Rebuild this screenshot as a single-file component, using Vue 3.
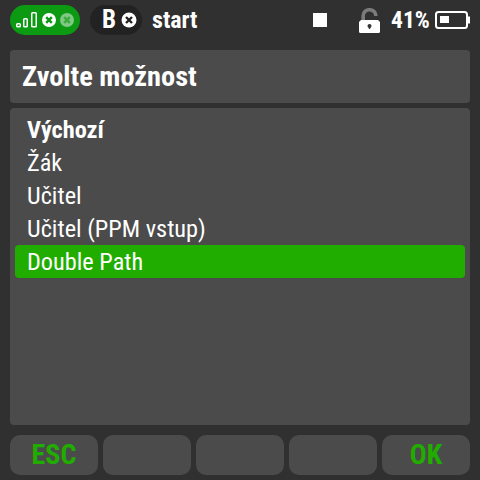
<script setup>
const rows = [
  { label: 'Výchozí', bold: true },
  { label: 'Žák' },
  { label: 'Učitel' },
  { label: 'Učitel (PPM vstup)' },
  { label: 'Double Path', active: true },
]
const keys = ['ESC', '', '', '', 'OK']
</script>

<template>
  <div class="screen">
    <header class="top">
      <div class="pill green">
        <svg class="bars" width="23" height="22" viewBox="0 0 23 22">
          <rect x="1.75" y="14.75" width="3.5" height="3" rx="0.8" />
          <rect x="8.75" y="9.75" width="3.5" height="8" rx="0.8" />
          <rect x="16.75" y="3.75" width="4.5" height="14" rx="0.8" />
        </svg>
        <svg class="x" width="16" height="16" viewBox="0 0 16 16">
          <circle cx="8" cy="8" r="7" fill="#fff" />
          <path d="M5.2 5.2l5.6 5.6M10.8 5.2l-5.6 5.6" stroke="#0c9a12" stroke-width="2.4" />
        </svg>
        <svg class="x" width="16" height="16" viewBox="0 0 16 16">
          <circle cx="8" cy="8" r="7" fill="#80c884" />
          <path d="M5.2 5.2l5.6 5.6M10.8 5.2l-5.6 5.6" stroke="#0c9a12" stroke-width="2.4" opacity="0.6" />
        </svg>
      </div>
      <div class="pill dark">
        <span class="b">B</span>
        <svg class="x" width="16" height="16" viewBox="0 0 16 16">
          <circle cx="8" cy="8" r="7.5" fill="#fff" />
          <path d="M5 5l6 6M11 5l-6 6" stroke="#222" stroke-width="2.4" />
        </svg>
      </div>
      <span class="start">start</span>
      <span class="stop"></span>
      <svg class="lock" width="21" height="25" viewBox="0 0 21 25">
        <path d="M4.2 13V7.500a6.300 5.800 0 0 1 12.600 0V8" fill="none" stroke="#7b7b7b" stroke-width="3.600" />
        <path d="M2 12h17l2 2v9.500a1.500 1.500 0 0 1-1.500 1.500h-18A1.500 1.500 0 0 1 0 23.500V14z" fill="#fff" />
        <circle cx="10.500" cy="18" r="2" fill="#333" />
        <rect x="9.800" y="18" width="1.400" height="3" fill="#333" />
      </svg>
      <span class="pct">41%</span>
      <svg class="batt" width="35" height="18" viewBox="0 0 35 18">
        <rect x="1" y="1" width="31" height="16" rx="2.500" fill="none" stroke="#fff" stroke-width="2" />
        <rect x="32.500" y="5.500" width="2.500" height="7" fill="#fff" />
        <rect x="5" y="5" width="9" height="7" fill="#fff" />
      </svg>
    </header>

    <section class="title panel">Zvolte možnost</section>

    <section class="list panel">
      <div v-for="r in rows" :key="r.label" class="row" :class="{ bold: r.bold, active: r.active }">{{ r.label }}</div>
    </section>

    <footer class="keys">
      <div v-for="(k, i) in keys" :key="i" class="key">{{ k }}</div>
    </footer>
  </div>
</template>

<style>
html, body { margin: 0; background: #303030; }
</style>

<style scoped>
.screen {
  width: 480px;
  height: 480px;
  box-sizing: border-box;
  padding: 0 10px 5px;
  background: #303030;
  display: flex;
  flex-direction: column;
  color: #fff;
  font-family: "Roboto", "Liberation Sans", sans-serif;
  font-stretch: 75%;
  overflow: hidden;
}
.top {
  height: 40px;
  margin: 0 0 10px;
  display: flex;
  align-items: center;
  flex: none;
}
.top > * { flex: none; }
.pill {
  height: 30px;
  border-radius: 15px;
  display: flex;
  align-items: center;
  box-sizing: border-box;
}
.pill svg { flex: none; }
.green {
  width: 70px;
  background: #0c9a12;
  padding-left: 5px;
  gap: 3px;
}
.green .x + .x { margin-left: -1px; }
.dark {
  width: 52px;
  margin-left: 10px;
  background: #222;
  padding-left: 12px;
  gap: 7px;
}
.b { width: 12px; font-size: 25px; font-weight: 700; line-height: 30px; }
.start { margin-left: 10px; font-size: 24px; font-weight: 700; }
.stop { width: 14px; height: 14px; background: #fff; margin-left: auto; }
.lock { margin-left: 32px; }
.pct { width: 37px; margin-left: 11px; font-size: 23.5px; font-weight: 700; white-space: nowrap; }
.batt { margin-left: 7px; }
.bars rect { fill: none; stroke: #fff; stroke-width: 1.5; }
.panel { background: #4b4b4b; border-radius: 4px; flex: none; }
.title {
  height: 53px;
  line-height: 53px;
  padding-left: 12px;
  font-size: 28.4px;
  font-weight: 700;
}
.list {
  height: 317px;
  margin-top: 5px;
  padding: 5px;
  box-sizing: border-box;
}
.row {
  height: 33px;
  line-height: 33px;
  padding-left: 12px;
  font-size: 24.3px;
  border-radius: 4px;
}
.row.bold { font-weight: 700; }
.row.active { background: #20ad00; }
.keys {
  margin-top: 10px;
  display: flex;
  gap: 5px;
}
.key {
  flex: 1;
  height: 40px;
  line-height: 40px;
  border-radius: 10px;
  background: #4b4b4b;
  text-align: center;
  color: #20ad00;
  font-size: 28px;
  font-weight: 700;
}
</style>
